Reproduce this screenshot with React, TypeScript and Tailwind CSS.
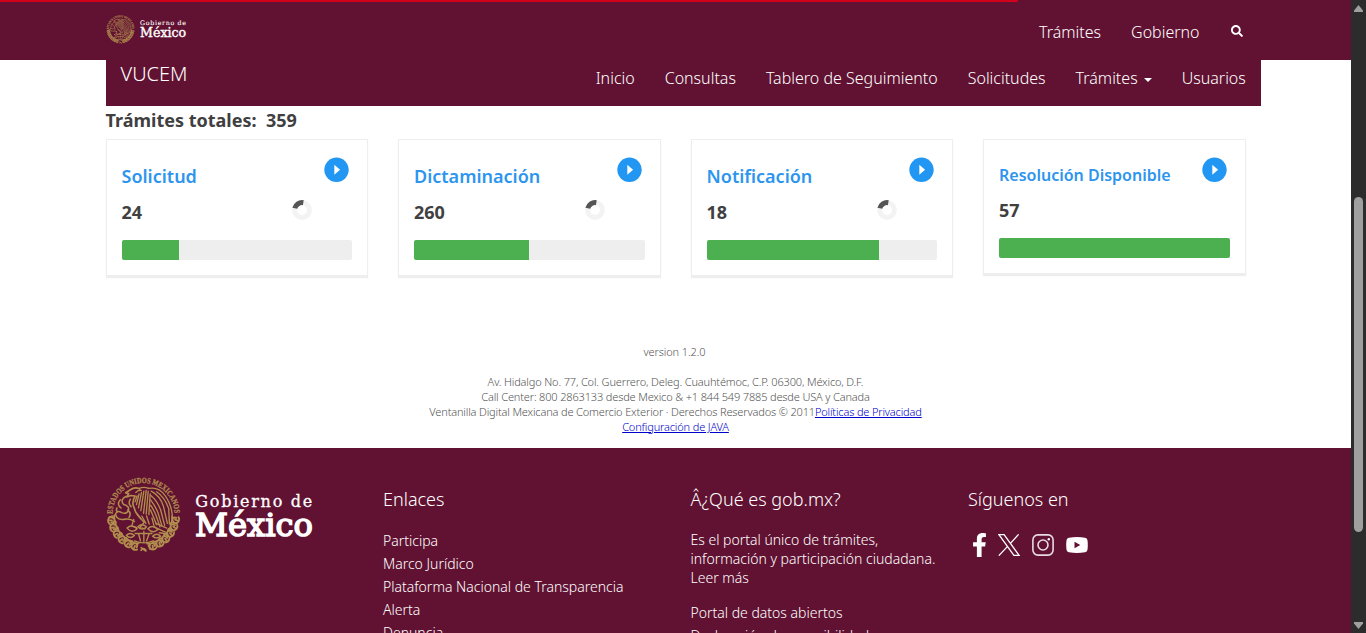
import React from "react";
import { FaFacebookF, FaYoutube, FaSearch } from "react-icons/fa";

const GOLD = "#b18d4e";

function Leaf({ angle }: { angle: number }) {
  return (
    <g transform={`rotate(${angle} 111 113)`}>
      <path
        d="M215 103q7 9-3 20q-15-3-14-12q3-7 11-5M196 104q5 12 0 22M203 124l9-3M206 112l6 1"
        fill="none"
        stroke={GOLD}
        strokeWidth="5.5"
      />
    </g>
  );
}

function Emblem({ id, className }: { id: string; className: string }) {
  return (
    <svg viewBox="0 0 222 226" className={className} fill="none" stroke={GOLD} strokeLinecap="round" strokeLinejoin="round">
      <defs>
        <path id={id} d="M19 110A92 92 0 0 1 203 110" />
      </defs>
      <text fill={GOLD} stroke={GOLD} strokeWidth="0.8" className="font-['Liberation_Serif',serif] text-[24px] font-bold">
        <textPath href={`#${id}`} textLength="286" lengthAdjust="spacingAndGlyphs">
          ESTADOS UNIDOS MEXICANOS
        </textPath>
      </text>
      {[9, 22, 35, 48, 61, 74, 106, 119, 132, 145, 158, 171].map((a) => (
        <Leaf key={a} angle={a} />
      ))}
      <path d="M104 218q7-10 14 0M104 210l14 10" strokeWidth="5" />
      {/* head, neck and body */}
      <path
        d="M100 36q-14-8-28 2l-14 9 9 2-6 10 13-4 12 2q-8 12-6 26l8 22 16 20"
        strokeWidth="5"
      />
      <path
        d="M98 34q14-6 28 0M88 46q8-8 16-6M92 56l-6 18M98 50l-8 32M105 46l-9 46M112 42l-9 58M119 40l-8 68M125 42l-6 68M131 50l-4 62"
        strokeWidth="4"
      />
      {/* raised wing */}
      <path
        d="M126 34q30-6 48 20q18 24 22 54q1 18-3 34M134 42q26 14 36 44l12 52M132 54q20 16 30 44l12 46M132 68q14 18 22 38l12 40M132 84q10 14 16 30l12 34M132 98l18 44M150 44q24 16 36 50l2 46"
        strokeWidth="4"
      />
      {/* snake */}
      <path
        d="M58 58q-18 10-6 24q18 4 14 18q-6 12-20 6q-14-8-18 4q2 18 24 16q18-4 32 6M42 68q-12 14 2 24M32 92q-4 8 2 12M64 98q12 10 4 22M72 66q-8 12 2 22"
        strokeWidth="4.6"
      />
      {/* tail and talons */}
      <path
        d="M92 112l20 22M106 116l12 22M120 116l8 24M136 122l6 22M148 138l32 14M142 148l34 16M82 126l-6 20 14 4M112 136l-12 14 16 4"
        strokeWidth="4"
      />
      {/* nopal and stone */}
      <path
        d="M62 152q14-14 30 2q-14 16-30-2M94 148q12-12 26 0q-12 14-26 0M124 154q14-14 30 2q-16 14-30-2M60 174q10-12 24 0q-12 12-24 0M138 176q12-12 24 0q-12 10-24 0M86 168h50M96 168l6 22M112 162v30M128 168l-8 22M84 190q28 12 56 0M158 166l16 2"
        strokeWidth="4.2"
      />
    </svg>
  );
}

function Wordmark({ className, weight }: { className: string; weight: number }) {
  return (
    <svg viewBox="0 0 120 50" className={className} overflow="visible" fill="#fff" stroke="#fff">
      <text x="0.3" y="16" textLength="117" lengthAdjust="spacing" strokeWidth={weight} className="font-['DejaVu_Serif',serif] text-[16px]">
        Gobierno de
      </text>
      <text x="0" y="45" textLength="118" lengthAdjust="spacingAndGlyphs" className="font-['DejaVu_Serif',serif] text-[32.5px]" strokeWidth={weight * 5}>
        México
      </text>
    </svg>
  );
}

function PlayIcon() {
  return (
    <svg viewBox="0 0 25 25" className="h-[25px] w-[25px]">
      <circle cx="12.5" cy="12.8" r="12.2" fill="#2196f3" />
      <path d="M10.3 7.8v10l5.8-5z" fill="#fff" />
    </svg>
  );
}

function Spinner() {
  return (
    <svg viewBox="0 0 20 20" className="h-5 w-5" fill="none" strokeWidth="5">
      <circle cx="10" cy="10" r="7.4" stroke="#f3f3f3" />
      <path d="M2.8 8.3A7.4 7.4 0 0 1 11.3 2.7" stroke="#555" />
    </svg>
  );
}

type Card = { title: string; count: number; pct: number; compact?: boolean };

const cards: Card[] = [
  { title: "Solicitud", count: 24, pct: 25 },
  { title: "Dictaminación", count: 260, pct: 50 },
  { title: "Notificación", count: 18, pct: 75 },
  { title: "Resolución Disponible", count: 57, pct: 100, compact: true },
];

function StatusCard({ title, count, pct, compact }: Card) {
  return (
    <div
      className={
        compact
          ? "h-[135px] w-[262.5px] border border-[#eee] bg-white px-[15px] shadow-[0_2px_1px_#eeeeee]"
          : "h-[137px] w-[262.5px] border border-[#eee] bg-white px-[15px] shadow-[0_2px_1px_#eeeeee]"
      }
    >
      <div className="flex h-[50px] justify-between">
        <h3
          className={
            compact
              ? "pt-[24px] text-[16px] leading-[22px] font-semibold whitespace-nowrap text-[#2d95ee]"
              : "pt-[24px] text-[18px] leading-[25px] font-semibold text-[#2d95ee]"
          }
        >
          {title}
        </h3>
        <div className="pt-[17px] pr-[2.6px]">
          <PlayIcon />
        </div>
      </div>
      <div className={compact ? "flex h-12 justify-between pt-2" : "flex h-[50px] justify-between pt-2.5"}>
        <span className="text-[18px] leading-[25px] font-bold text-[#404041]">{count}</span>
        {!compact && (
          <div className="pr-10">
            <Spinner />
          </div>
        )}
      </div>
      <div className="h-5 overflow-hidden rounded-[2px] bg-[#eee]">
        <div className="h-5 bg-[#4caf50]" style={{ width: `${pct}%` }} />
      </div>
    </div>
  );
}

export default function App() {
  return (
    <div className="flex h-[633px] w-[1366px] overflow-hidden bg-white font-['Noto_Sans',sans-serif] text-[#404041]">
      <div className="flex h-[633px] w-[1351px] flex-col overflow-hidden">
        <header className="h-[60px] shrink-0 bg-[#611232]">
          <div className="h-0.5 w-[1018px] bg-[#d0021b]" />
          <div className="flex h-[58px] justify-between pr-[106.5px] pl-[105.5px]">
            <div className="flex pt-[13px]">
              <Emblem id="seal-small" className="h-[29px] w-[29px]" />
              <Wordmark weight={0.2} className="mt-[4px] ml-[5px] h-[20px] w-[47px]" />
            </div>
            <nav className="flex gap-[30px] pt-[19px] text-[16px] leading-[23px] font-light text-white">
              <a>Trámites</a>
              <a>Gobierno</a>
              <FaSearch className="mt-[3.5px] mr-[1.5px] ml-[1.5px] h-3 w-3" />
            </nav>
          </div>
        </header>

        <div className="ml-[106px] flex h-[46px] w-[1155px] shrink-0 justify-between bg-[#611232] pr-[15.2px] pl-[14.5px] text-white">
          <span className="text-[20px] leading-[28px] font-light">VUCEM</span>
          <nav className="flex items-start gap-[30px] pt-[7px] text-[16px] leading-[23px] font-light">
            <a>Inicio</a>
            <a>Consultas</a>
            <a>Tablero de Seguimiento</a>
            <a>Solicitudes</a>
            <a className="flex items-center gap-[6px]">
              Trámites
              <svg viewBox="0 0 8 4" className="mt-[3px] h-1 w-2" fill="#fff">
                <path d="M0 0h8L4 4z" />
              </svg>
            </a>
            <a>Usuarios</a>
          </nav>
        </div>

        <main className="h-[342px] shrink-0 px-[105.5px]">
          <h2 className="h-[33px] pt-[2px] text-[18px] leading-[25px] font-bold whitespace-pre">{"Trámites totales:  359"}</h2>
          <div className="flex items-start gap-[30px]">
            {cards.map((c) => (
              <StatusCard key={c.title} {...c} />
            ))}
          </div>
          <div className="mt-[68px] text-center text-[11px] leading-[15px] font-light tracking-[-0.155px] text-[#545454]">
            <p className="pr-[2px] tracking-[-0.1px]">version 1.2.0</p>
            <p className="mt-[15px]">Av. Hidalgo No. 77, Col. Guerrero, Deleg. Cuauhtémoc, C.P. 06300, México, D.F.</p>
            <p>Call Center: 800 2863133 desde Mexico &amp; +1 844 549 7885 desde USA y Canada</p>
            <p>
              Ventanilla Digital Mexicana de Comercio Exterior · Derechos Reservados © 2011
              <a className="text-[#0000cc] underline">Políticas de Privacidad</a>
            </p>
            <p>
              <a className="text-[#0000cc] underline">Configuración de JAVA</a>
            </p>
          </div>
        </main>

        <footer className="flex h-[185px] shrink-0 overflow-hidden bg-[#611232] pl-[106px] text-white">
          <div className="flex w-[277px] pt-[29px]">
            <Emblem id="seal-large" className="h-[76px] w-[75px]" />
            <Wordmark weight={0.3} className="mt-[14px] ml-[14px] h-[50px] w-[120px]" />
          </div>
          <div className="w-[307.5px] pt-[38px] font-light">
            <h4 className="text-[18px] leading-[27px]">Enlaces</h4>
            <ul className="mt-[16px] text-[14px] leading-[23px]">
              <li>Participa</li>
              <li>Marco Jurídico</li>
              <li>Plataforma Nacional de Transparencia</li>
              <li>Alerta</li>
              <li>Denuncia</li>
            </ul>
          </div>
          <div className="w-[277.5px] pt-[38px] font-light">
            <h4 className="text-[18px] leading-[27px]">Â¿Qué es gob.mx?</h4>
            <p className="mt-[17px] text-[14px] leading-[19px] whitespace-nowrap">
              Es el portal único de trámites,
              <br />
              información y participación ciudadana.
              <br />
              Leer más
            </p>
            <ul className="mt-[14px] text-[14px] leading-[23px]">
              <li>Portal de datos abiertos</li>
              <li>Declaración de accesibilidad</li>
            </ul>
          </div>
          <div className="pt-[38px] font-light">
            <h4 className="text-[18px] leading-[27px]">Síguenos en</h4>
            <div className="mt-[20px] flex h-6 items-center pl-[4px]">
              <FaFacebookF className="h-[24px] w-[15px]" />
              <svg viewBox="0 0 22 22" className="ml-[11px] h-[22px] w-[22px]" fill="none" stroke="#fff" strokeWidth="1.3">
                <path d="M.9.7h5.2l15 20.6h-5.2zM20.6.4 12.2 9.6M9.6 12.4.8 21.6" />
              </svg>
              <svg viewBox="0 0 22 22" className="ml-[12px] h-[22px] w-[22px]" fill="none" stroke="#fff" strokeOpacity="0.85" strokeWidth="1.6">
                <rect x=".9" y=".9" width="20.2" height="20.2" rx="5" />
                <circle cx="11" cy="11" r="5" />
                <circle cx="16.8" cy="5.2" r="1.2" fill="#fff" stroke="none" />
              </svg>
              <svg viewBox="0 0 22 16" className="ml-[12px] h-[16px] w-[22px]" fill="#fff" fillRule="evenodd">
                <path d="M3 .7Q11-.5 19 .7q2.2.4 2.5 2.5.6 4.8 0 9.6-.3 2.1-2.5 2.5-8 1.2-16 0Q.8 14.9.5 12.8-.1 8 .5 3.2.8 1.1 3 .7zM8.500 4.700v6.600L14.300 8z" />
              </svg>
            </div>
          </div>
        </footer>
      </div>

      <div className="flex h-[633px] w-[15px] flex-col items-center bg-[#2c2c2c] pt-[5px]">
        <svg viewBox="0 0 9 7" className="h-[7px] w-[9px]" fill="#9f9f9f">
          <path d="M4.5 0 9 5.5V7H0V5.5z" />
        </svg>
        <div className="mt-[185px] h-[335px] w-[9px] rounded-full bg-[#9f9f9f]" />
        <svg viewBox="0 0 9 7" className="mt-[90px] h-[7px] w-[9px]" fill="#9f9f9f">
          <path d="M4.5 7 0 1.5V0h9v1.5z" />
        </svg>
      </div>
    </div>
  );
}
